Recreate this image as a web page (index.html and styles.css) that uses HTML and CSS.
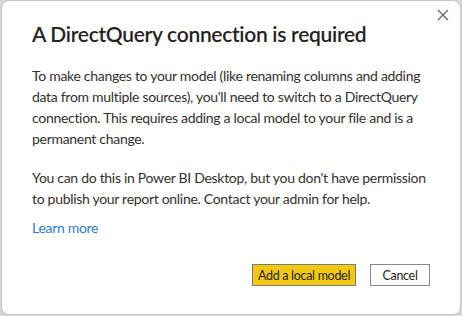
FILE: index.html
```html
<!DOCTYPE html>
<html lang="en">

<head>
    <meta charset="UTF-8">
    <meta name="viewport" content="width=device-width, initial-scale=1.0">
    <title>DirectQuery connection</title>
    <link rel="stylesheet" href="styles.css">
</head>

<body>
    <div class="dialog">
        <button class="close-btn" aria-label="Close">
            <svg width="12" height="12" viewBox="0 0 12 12">
                <path d="M1 1 L11 11 M11 1 L1 11" stroke="#605e5c" stroke-width="1.1" fill="none"></path>
            </svg>
        </button>
        <h2 class="title">A DirectQuery connection is required</h2>
        <p class="text">To make changes to your model (like renaming columns and adding data from multiple sources), you'll need to switch to a DirectQuery connection. This requires adding a local model to your file and is a permanent change.</p>
        <p class="text">You can do this in Power BI Desktop, but you don't have permission to publish your report online. Contact your admin for help.</p>
        <a class="link" href="#">Learn more</a>
        <div class="actions">
            <button class="btn primary">Add a local model</button>
            <button class="btn cancel">Cancel</button>
        </div>
    </div>
</body>

</html>
```

FILE: styles.css
```css
body {
    margin: 0;
    background-color: #d6d6d6;
    font-family: "Lato", "Open Sans", sans-serif;
}

.dialog {
    position: relative;
    box-sizing: border-box;
    width: 460px;
    height: 315px;
    margin: 0 1px 1px 1px;
    padding: 0 30px 0 30px;
    background-color: white;
    border: 1px solid #c6c6c6;
    border-radius: 8px;
    color: #323130;
}

.close-btn {
    position: absolute;
    top: 8px;
    right: 10px;
    width: 14px;
    height: 14px;
    padding: 0;
    border: none;
    background: none;
    cursor: pointer;
}

.title {
    margin: 0;
    padding-top: 20px;
    font-size: 21px;
    font-weight: 600;
    line-height: 26px;
    letter-spacing: -0.3px;
    color: #252423;
}

.text {
    margin: 0;
    padding-top: 18px;
    font-size: 14px;
    line-height: 21px;
    letter-spacing: -0.3px;
}

.link {
    display: block;
    margin-top: 8px;
    font-size: 14px;
    line-height: 21px;
    letter-spacing: -0.3px;
    color: #2b7cd3;
    text-decoration: none;
}

.actions {
    display: flex;
    justify-content: flex-end;
    gap: 14px;
    margin-top: 26px;
}

.btn {
    height: 22px;
    padding: 0;
    font-family: inherit;
    font-size: 12.5px;
    letter-spacing: -0.3px;
    color: #252423;
    background-color: white;
    border: 1px solid #8a8886;
    cursor: pointer;
}

.primary {
    width: 104px;
    background-color: #f2c811;
    border-color: #7a7a7a;
}

.cancel {
    width: 60px;
}
```
